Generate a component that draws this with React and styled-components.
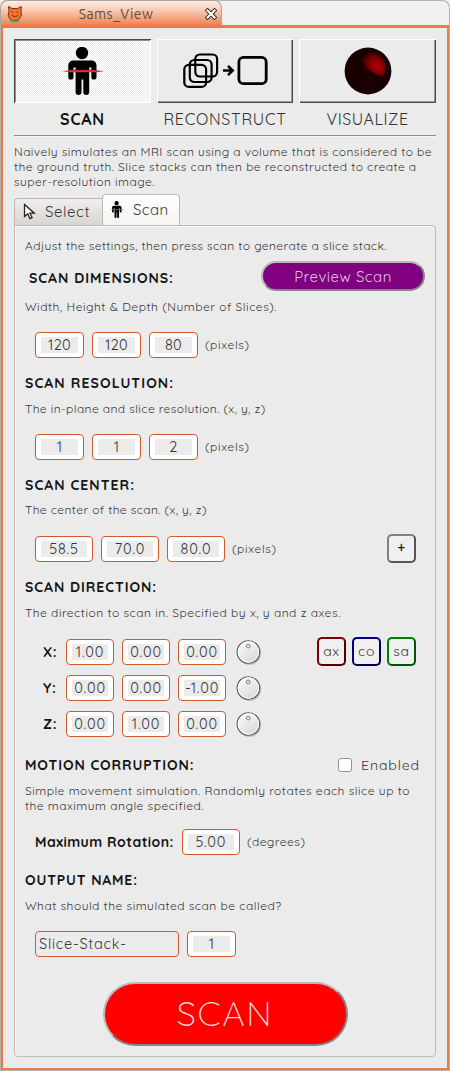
import React from "react";
import styled, { createGlobalStyle } from "styled-components";

const FONT = '"Quicksand", "Lato", sans-serif';

const Global = createGlobalStyle`
  * { box-sizing: border-box; }
  body { margin: 0; background: #f2f1ef; font-family: ${FONT}; }
  button { font-family: inherit; margin: 0; padding: 0; }
`;

const Window = styled.div`
  width: 450px;
  height: 1071px;
  display: flex;
  flex-direction: column;
  overflow: hidden;
`;

const TitleBar = styled.header`
  height: 25px;
  flex: none;
  display: flex;
  border: 1px solid #b4b1ad;
  border-bottom: 0;
  border-left: 0;
  border-radius: 7px 8px 0 0;
  background: #f2f1ef;
`;

const WindowTab = styled.div`
  width: 222px;
  height: 27px;
  margin-top: -1px;
  padding: 0 4px 0 6px;
  display: flex;
  align-items: center;
  justify-content: space-between;
  border: 1px solid #b0a49d;
  border-bottom: 0;
  border-radius: 8px 8px 0 0;
  background: linear-gradient(#fceee7 0%, #f9d5c3 25%, #f5ac89 60%, #f07746 100%);
  color: #5d4d45;
  font: 400 14px "Ubuntu", "Noto Sans", sans-serif;
  letter-spacing: 0.4px;
`;

const WindowTitle = styled.span`
  padding-left: 4px;
`;

const Body = styled.main`
  flex: 1;
  display: flex;
  flex-direction: column;
  padding: 11px;
  border: 2px solid #f07746;
  border-top-width: 3px;
  background: #ebebeb;
`;

const Frame = styled.div`
  flex: 1;
  display: flex;
  padding: 0 1px 1px;
  background: #b4b1ad;
`;

const Modes = styled.nav`
  display: grid;
  grid-template-columns: 137px 136px 137px;
  column-gap: 6px;
`;

const Mode = styled.div`
  display: flex;
  flex-direction: column;
  align-items: center;
`;

const ModeButton = styled.button`
  width: 100%;
  height: 64px;
  display: flex;
  align-items: center;
  justify-content: center;
  border: 0;
  background: ${(p) =>
    p.$on ? "repeating-conic-gradient(#fff 0 25%, #ebebeb 0 50%) 0 0 / 2px 2px" : "#ebebeb"};
  box-shadow: ${(p) =>
    p.$on
      ? "inset 1px 1px #4a4a4a, inset -1px -1px #fff, inset 2px 2px #8d8d8d"
      : "inset 1px 1px #fff, inset -1px -1px #4a4a4a, inset -2px -2px #9a9a9a"};
`;

const ModeLabel = styled.span`
  height: 32px;
  line-height: 32px;
  font-size: 16px;
  font-weight: ${(p) => (p.$on ? 700 : 400)};
  color: ${(p) => (p.$on ? "#111" : "#333")};
  letter-spacing: ${(p) => p.$ls}px;
`;

const Rule = styled.hr`
  width: 100%;
  height: 2px;
  flex: none;
  margin: 0 0 7px;
  border: 0;
  border-top: 1px solid #8f8f8f;
  border-bottom: 1px solid #f7f7f7;
`;

const Line = styled.span`
  display: block;
  letter-spacing: ${(p) => p.$ls ?? 0.45}px;
`;

const Copy = styled.p`
  flex: none;
  margin: ${(p) => p.$top ?? 9}px 0 0;
  font-size: 12px;
  line-height: 15px;
  white-space: nowrap;
  color: #363636;
`;

const Tabs = styled.div`
  height: 31px;
  flex: none;
  display: flex;
  align-items: flex-end;
  margin-top: 5px;
`;

const Tab = styled.div`
  width: ${(p) => p.$w}px;
  height: ${(p) => (p.$on ? 31 : 27)}px;
  display: flex;
  align-items: center;
  gap: 9px;
  padding: ${(p) => (p.$on ? "0 0 1px 7px" : "0 0 2px 8px")};
  border: 1px solid #bdb8b3;
  border-bottom: 0;
  border-right-width: ${(p) => (p.$on ? 1 : 0)}px;
  border-radius: ${(p) => (p.$on ? "4px 4px 0 0" : "4px 0 0 0")};
  background: ${(p) => (p.$on ? "linear-gradient(#fff, #f5f4f3)" : "linear-gradient(#f0efee, #d8d5d3)")};
  font-size: 15px;
  letter-spacing: ${(p) => (p.$on ? 0.4 : 0.6)}px;
  color: #3a3a3a;
`;

const Panel = styled.section`
  flex: 1;
  display: flex;
  flex-direction: column;
  padding: 12px 10px 0 10px;
  border: 1px solid #c0bbb7;
  border-radius: 0 4px 4px 4px;
  box-shadow: inset 1px 1px #f8f8f8;
`;

const Heading = styled.h2`
  margin: 0;
  font-size: 14px;
  line-height: 18px;
  font-weight: 700;
  color: #141414;
  white-space: nowrap;
  letter-spacing: ${(p) => p.$ls}px;
`;

const HeadingRow = styled.div`
  height: ${(p) => p.$h ?? 18}px;
  flex: none;
  display: flex;
  align-items: center;
  justify-content: space-between;
  margin-top: ${(p) => p.$top ?? 16}px;
`;

const TopHeading = styled(Heading)`
  padding: 4px 0 0 4px;
`;

const PreviewButton = styled.button`
  width: 164px;
  height: 30px;
  border: 2px solid;
  border-color: #b9b9b9 #858585 #858585 #b9b9b9;
  border-radius: 15px;
  background: #800080;
  color: #dcc4dc;
  font-size: 15px;
  letter-spacing: 0.5px;
`;

const Fields = styled.div`
  flex: none;
  display: flex;
  align-items: center;
  height: ${(p) => p.$h ?? 26}px;
  gap: 8px;
  margin-top: ${(p) => p.$top ?? 18}px;
  padding: 0 9px 0 10px;
`;

const Field = styled.span`
  width: ${(p) => p.$w ?? 49}px;
  height: 26px;
  flex: none;
  padding: 4px 5px;
  border: 1px solid #d4582a;
  border-radius: 4px;
  background: #fff;
`;

const Value = styled.span`
  display: block;
  height: 16px;
  line-height: 16px;
  text-align: center;
  white-space: nowrap;
  background: #ebebeb;
  color: #333;
  font-size: 14.5px;
  letter-spacing: ${(p) => p.$ls ?? 0.3}px;
`;

const NameField = styled.span`
  width: 144px;
  height: 26px;
  padding-left: 3px;
  line-height: 24px;
  border: 1px solid #d4582a;
  border-radius: 4px;
  color: #3a3a3a;
  font-size: 14.5px;
  letter-spacing: 0.75px;
`;

const Unit = styled.span`
  font-size: 12px;
  letter-spacing: ${(p) => p.$ls ?? 0.62}px;
  margin: -1px 0 0 -1px;
  color: #363636;
`;

const Spacer = styled.span`
  flex: 1;
`;

const Square = styled.button`
  width: 29px;
  height: 29px;
  flex: none;
  display: flex;
  align-items: center;
  justify-content: center;
  padding-bottom: 2px;
  border: 2px solid;
  border-color: ${(p) => `${p.$light} ${p.$dark} ${p.$dark} ${p.$light}`};
  border-radius: 5px;
  background: #f0f0f0;
  font-size: 14px;
  letter-spacing: 0.6px;
  color: #3a3a3a;
`;

const PlusButton = styled(Square)`
  font-weight: 500;
  color: #111;
`;

const Direction = styled.div`
  display: flex;
  flex: none;
  justify-content: space-between;
  margin: 17px 9px 0 18px;
`;

const AxisGrid = styled.div`
  display: grid;
  grid-template-columns: 15px 48px 48px 48px 28px;
  grid-auto-rows: 26px;
  column-gap: 8px;
  row-gap: 10px;
  align-items: center;
  padding-top: 2px;

  svg {
    justify-self: end;
  }
`;

const Planes = styled.div`
  display: flex;
  gap: 6px;
`;

const CheckLabel = styled.label`
  display: flex;
  align-items: center;
  gap: 9px;
  margin-right: 5px;
  font-size: 14px;
  letter-spacing: 0.92px;
  color: #3a3a3a;
`;

const Box = styled.span`
  width: 14px;
  height: 14px;
  border: 1px solid #98938e;
  border-radius: 3px;
  background: #fff;
`;

const ScanButton = styled.button`
  width: 245px;
  height: 64px;
  flex: none;
  align-self: center;
  margin: 25px 0 0;
  padding-bottom: 2px;
  border: 2px solid;
  border-color: #b9b9b9 #858585 #858585 #b9b9b9;
  border-radius: 32px;
  background: #f00;
  color: #ead9d0;
  font-size: 35px;
  font-weight: 300;
  letter-spacing: 1.5px;
`;

const StacksIcon = styled.svg`
  margin-left: 4px;
`;

function Person({ width, height }) {
  return (
    <svg width={width} height={height} viewBox="0 0 42 48" preserveAspectRatio="none">
      <circle cx="20" cy="6" r="6.2" />
      <path d="M11.500 13.500H29C32.500 13.500 34.500 15.500 34.500 18.500V30a2.600 2.600 0 0 1-5.200 0V20.500H27.200V45a2.800 2.800 0 0 1-5.900 0V32.500H19.500V45a2.800 2.800 0 0 1-5.900 0V20.500H11.500V30a2.600 2.600 0 0 1-5.200 0V18.500C6.300 15.500 8.500 13.500 11.500 13.500Z" />
      <path d="M8 22.500h25v2H8z" fill="#900" opacity=".75" />
      <path d="M0 24.300 8 23.200H35L42 24.300 35 25.200H8z" fill="#e33030" />
    </svg>
  );
}

function Stacks() {
  return (
    <StacksIcon width="88" height="38" viewBox="0 0 88 38" fill="none" stroke="#000" strokeWidth="2.2">
      <rect x="1.300" y="12.900" width="21.800" height="22" rx="4.500" />
      <rect x="6.800" y="8" width="21.800" height="22" rx="4.500" />
      <rect x="12.300" y="2.500" width="21.800" height="22" rx="4.500" />
      <path d="M40 18.500h9M45 13.800l4.700 4.700-4.700 4.700" strokeWidth="2.600" />
      <rect x="55.900" y="5.400" width="27.300" height="26.300" rx="4.500" strokeWidth="2.800" />
    </StacksIcon>
  );
}

function Sphere() {
  return (
    <svg width="48" height="48" viewBox="0 0 48 48">
      <defs>
        <radialGradient id="glow" cx="0" cy="0" r="15" gradientUnits="userSpaceOnUse" gradientTransform="translate(33 19) rotate(42) scale(1.150 .85)">
          <stop offset="0" stopColor="#b00000" />
          <stop offset=".3" stopColor="#980000" />
          <stop offset=".7" stopColor="#600000" />
          <stop offset="1" stopColor="#1c0000" />
        </radialGradient>
      </defs>
      <circle cx="24" cy="24" r="23.400" fill="#180000" />
      <path d="M18 11C20 6 29 4 35 8C41 12 43 22 40 28C38 31 30 27 25 23C21 20 17 17 18 11Z" fill="url(#glow)" />
      <circle cx="24" cy="34" r="4" fill="#210000" />
    </svg>
  );
}

function Mascot() {
  return (
    <svg width="16" height="18" viewBox="0 0 16 18">
      <path d="M1.500 1.500 5 3.500h5.500L14.300 1.500 14 6.500l.5 3.500-2.500 4-2 1.500H5.500L3 14 1.200 10.500 2 6.500z" fill="#fb7230" stroke="#5c2a12" strokeWidth=".9" />
      <path d="M3 16.500h9.500" stroke="#10d86a" strokeWidth="1.600" />
      <path d="M4.500 7.200h2M9.500 7.200h2M4.500 10.300q3.500 3 7 0" stroke="#7a2c08" strokeWidth=".9" fill="none" />
    </svg>
  );
}

function Close() {
  return (
    <svg width="12" height="12" viewBox="0 0 12 12" strokeLinecap="square">
      <path d="M2.500 2.500l7 7M9.500 2.500l-7 7" stroke="#2c2420" strokeWidth="4" />
      <path d="M2.500 2.500l7 7M9.500 2.500l-7 7" stroke="#fff" strokeWidth="2.200" />
    </svg>
  );
}

function Cursor() {
  return (
    <svg width="13" height="17" viewBox="0 0 13 17">
      <path d="M1.500 1.500V13.500l3.200-2.700 2.200 4.900 2.200-1-2.200-4.500h4.400z" fill="#fff" stroke="#222" strokeWidth="1.300" />
    </svg>
  );
}

function Dial() {
  return (
    <svg width="26" height="26" viewBox="0 0 26 26">
      <defs>
        <linearGradient id="dial" x2=".6" y2="1">
          <stop offset="0" stopColor="#fff" />
          <stop offset="1" stopColor="#d9d9d9" />
        </linearGradient>
      </defs>
      <circle cx="13.600" cy="14.300" r="11.600" fill="#b4b4b4" opacity=".8" />
      <circle cx="12.400" cy="13" r="11.300" fill="url(#dial)" stroke="#5a5a5a" strokeWidth="1.100" />
      <circle cx="12.400" cy="13" r="10.200" fill="none" stroke="#fff" />
      <circle cx="12.200" cy="7" r="2" fill="#ddd" stroke="#858585" />
    </svg>
  );
}

const AXES = [
  ["X:", "1.00", "0.00", "0.00"],
  ["Y:", "0.00", "0.00", "-1.00"],
  ["Z:", "0.00", "1.00", "0.00"],
];

function Inputs({ values, width, ls }) {
  return values.map((v, i) => (
    <Field key={i} $w={width}>
      <Value $ls={ls}>{v}</Value>
    </Field>
  ));
}

export default function App() {
  return (
    <Window>
      <Global />
      <TitleBar>
        <WindowTab>
          <Mascot />
          <WindowTitle>Sams_View</WindowTitle>
          <Close />
        </WindowTab>
      </TitleBar>
      <Frame>
        <Body>
          <Modes>
            <Mode>
              <ModeButton $on><Person width={42} height={48} /></ModeButton>
              <ModeLabel $on $ls={0.8}>SCAN</ModeLabel>
            </Mode>
            <Mode>
              <ModeButton><Stacks /></ModeButton>
              <ModeLabel $ls={0.75}>RECONSTRUCT</ModeLabel>
            </Mode>
            <Mode>
              <ModeButton><Sphere /></ModeButton>
              <ModeLabel $ls={0.55}>VISUALIZE</ModeLabel>
            </Mode>
          </Modes>
          <Rule />
          <Copy $top={0}>
            <Line $ls={0.43}>Naively simulates an MRI scan using a volume that is considered to be</Line>
            <Line $ls={0.44}>the ground truth. Slice stacks can then be reconstructed to create a</Line>
            <Line>super-resolution image.</Line>
          </Copy>
          <Tabs>
            <Tab $w={88}><Cursor />Select</Tab>
            <Tab $w={78} $on><Person width={14} height={17} />Scan</Tab>
          </Tabs>
          <Panel>
            <Copy $top={0}><Line $ls={0.42}>Adjust the settings, then press scan to generate a slice stack.</Line></Copy>

            <HeadingRow $h={30} $top={8}>
              <TopHeading $ls={0.98}>SCAN DIMENSIONS:</TopHeading>
              <PreviewButton>Preview Scan</PreviewButton>
            </HeadingRow>
            <Copy $top={8}><Line $ls={0.51}>Width, Height &amp; Depth (Number of Slices).</Line></Copy>
            <Fields>
              <Inputs values={["120", "120", "80"]} />
              <Unit>(pixels)</Unit>
            </Fields>

            <HeadingRow><Heading $ls={1.09}>SCAN RESOLUTION:</Heading></HeadingRow>
            <Copy><Line $ls={0.4}>The in-plane and slice resolution. (x, y, z)</Line></Copy>
            <Fields>
              <Inputs values={["1", "1", "2"]} />
              <Unit>(pixels)</Unit>
            </Fields>

            <HeadingRow><Heading $ls={1.04}>SCAN CENTER:</Heading></HeadingRow>
            <Copy $top={8}><Line $ls={0.4}>The center of the scan. (x, y, z)</Line></Copy>
            <Fields $h={29} $top={17}>
              <Inputs values={["58.5", "70.0", "80.0"]} width={58} ls={0.8} />
              <Unit>(pixels)</Unit>
              <Spacer />
              <PlusButton $light="#808080" $dark="#555">+</PlusButton>
            </Fields>

            <HeadingRow $top={15}><Heading $ls={0.94}>SCAN DIRECTION:</Heading></HeadingRow>
            <Copy><Line $ls={0.5}>The direction to scan in. Specified by x, y and z axes.</Line></Copy>
            <Direction>
              <AxisGrid>
                {AXES.map(([axis, ...values]) => (
                  <React.Fragment key={axis}>
                    <Heading as="span" $ls={0.6}>{axis}</Heading>
                    <Inputs values={values} width={48} ls={0.8} />
                    <Dial />
                  </React.Fragment>
                ))}
              </AxisGrid>
              <Planes>
                <Square $light="#800000" $dark="#550000">ax</Square>
                <Square $light="#000080" $dark="#000055">co</Square>
                <Square $light="#008000" $dark="#005500">sa</Square>
              </Planes>
            </Direction>

            <HeadingRow $top={19}>
              <Heading $ls={0.88}>MOTION CORRUPTION:</Heading>
              <CheckLabel><Box />Enabled</CheckLabel>
            </HeadingRow>
            <Copy>
              <Line $ls={0.49}>Simple movement simulation. Randomly rotates each slice up to</Line>
              <Line $ls={0.48}>the maximum angle specified.</Line>
            </Copy>
            <Fields $top={16}>
              <Heading as="span" $ls={0.46}>Maximum Rotation:</Heading>
              <Inputs values={["5.00"]} width={58} ls={0.8} />
              <Unit $ls={0.5}>(degrees)</Unit>
            </Fields>

            <HeadingRow><Heading $ls={0.84}>OUTPUT NAME:</Heading></HeadingRow>
            <Copy><Line $ls={0.49}>What should the simulated scan be called?</Line></Copy>
            <Fields>
              <NameField>Slice-Stack-</NameField>
              <Inputs values={["1"]} />
            </Fields>

            <ScanButton>SCAN</ScanButton>
          </Panel>
        </Body>
      </Frame>
    </Window>
  );
}
